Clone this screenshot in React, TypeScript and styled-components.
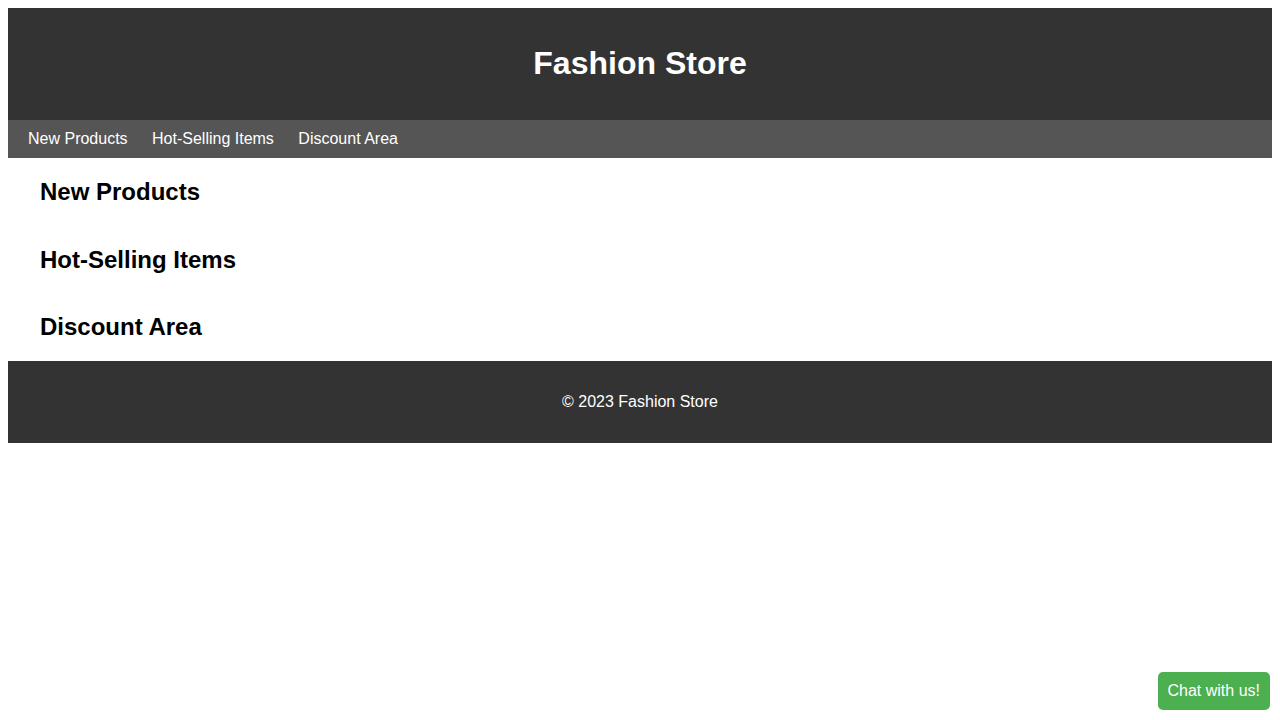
import React from "react";
import styled, { createGlobalStyle } from "styled-components";

const Global = createGlobalStyle`
  body {
    margin: 8px;
    font-family: "Liberation Sans", Arial, sans-serif;
    background: #fff;
    color: #000;
  }
`;

const Header = styled.header`
  background: #333;
  color: #fff;
  padding: 16px;
  text-align: center;
`;

const Title = styled.h1`
  font-size: 32px;
  margin: 21.44px 0;
`;

const Nav = styled.nav`
  background: #555;
  padding: 10px;
  line-height: normal;
`;

const NavLink = styled.a`
  color: #fff;
  text-decoration: none;
  padding: 0 10px;
  font-size: 16px;
`;

const Main = styled.main`
  padding: 0;
`;

const Section = styled.section`
  display: flow-root;
  padding: 0 32px;
`;

const SectionTitle = styled.h2`
  font-size: 24px;
  margin: 19.92px 0;
`;

const Footer = styled.footer`
  background: #333;
  color: #fff;
  padding: 16px;
  text-align: center;
`;

const FooterText = styled.p`
  margin: 16px 0;
  font-size: 16px;
`;

const ChatButton = styled.button`
  position: fixed;
  right: 10px;
  bottom: 10px;
  background: #4caf50;
  color: #fff;
  border: none;
  border-radius: 5px;
  padding: 10px;
  font-family: "Liberation Sans", Arial, sans-serif;
  font-size: 16px;
  line-height: normal;
  cursor: pointer;
`;

const sections = ["New Products", "Hot-Selling Items", "Discount Area"];

export default function App() {
  return (
    <>
      <Global />
      <Header>
        <Title>Fashion Store</Title>
      </Header>
      <Nav>
        {sections.map((s, i) => (
          <React.Fragment key={s}>
            <NavLink href="#">{s}</NavLink>
            {i < sections.length - 1 ? " " : null}
          </React.Fragment>
        ))}
      </Nav>
      <Main>
        {sections.map((s) => (
          <Section key={s}>
            <SectionTitle>{s}</SectionTitle>
          </Section>
        ))}
      </Main>
      <Footer>
        <FooterText>© 2023 Fashion Store</FooterText>
      </Footer>
      <ChatButton>Chat with us!</ChatButton>
    </>
  );
}
